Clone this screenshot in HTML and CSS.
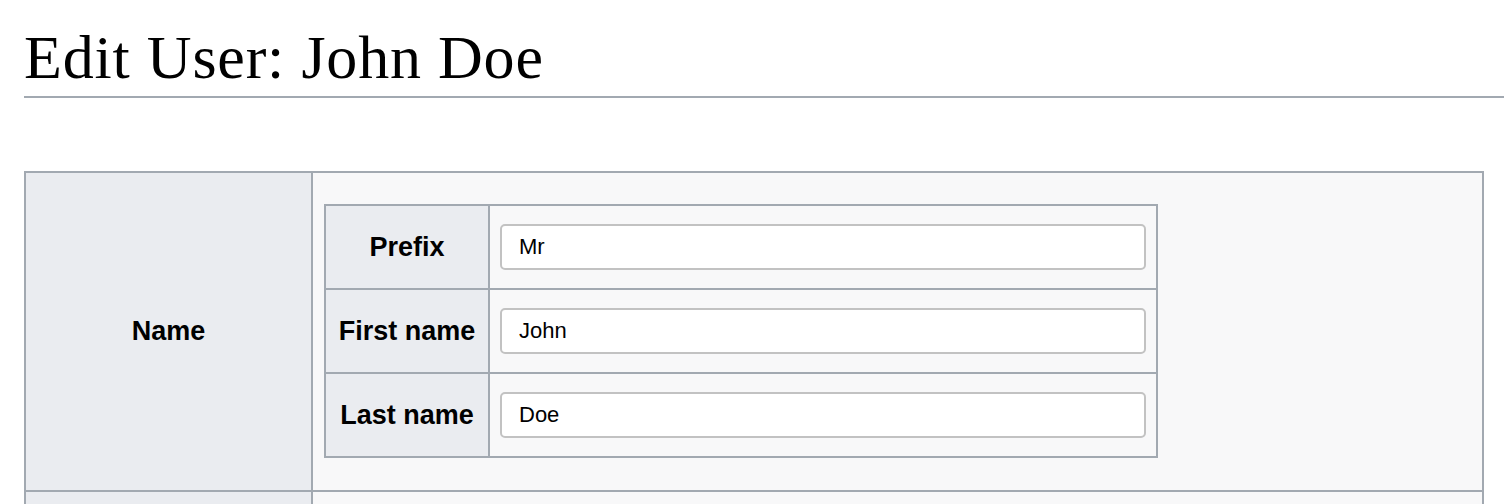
FILE: index.html
```html
<!DOCTYPE html>
<html lang="en">
<head>
<meta charset="utf-8">
<title>Edit User: John Doe</title>
<link rel="stylesheet" href="styles.css">
</head>
<body>
<h1 class="page-title">Edit User: John Doe</h1>
<table class="wikitable outer">
  <tr>
    <th class="outer-head">Name</th>
    <td class="outer-cell">
      <table class="wikitable inner">
        <tr>
          <th class="inner-head">Prefix</th>
          <td class="inner-cell"><input class="field" type="text" value="Mr"></td>
        </tr>
        <tr>
          <th class="inner-head">First name</th>
          <td class="inner-cell"><input class="field" type="text" value="John"></td>
        </tr>
        <tr>
          <th class="inner-head">Last name</th>
          <td class="inner-cell"><input class="field" type="text" value="Doe"></td>
        </tr>
      </table>
    </td>
  </tr>
  <tr>
    <th class="outer-head">&nbsp;</th>
    <td class="outer-cell">&nbsp;</td>
  </tr>
</table>
</body>
</html>
```
FILE: styles.css
```css
html, body {
  margin: 0;
  padding: 0;
  background: #ffffff;
  color: #000000;
}
body {
  padding-left: 24px;
  font-family: "Liberation Sans", Arial, sans-serif;
  overflow: hidden;
}
.page-title {
  font-family: "Liberation Serif", "Times New Roman", serif;
  font-weight: normal;
  font-size: 62px;
  letter-spacing: 0.8px;
  line-height: 72px;
  margin: 21px 0 0 0;
  padding: 0 0 3px 0;
  border-bottom: 2px solid #a2a9b1;
}
.wikitable {
  border-collapse: collapse;
  border: 2px solid #a2a9b1;
}
.wikitable th,
.wikitable td {
  border: 2px solid #a2a9b1;
}
.outer {
  margin-top: 73px;
  width: 1460px;
}
.outer-head {
  width: 285px;
  background: #eaecf0;
  font-size: 27px;
  font-weight: bold;
  text-align: center;
  padding: 0;
}
.outer-cell {
  background: #f8f8f9;
  padding: 31px 11px 32px 11px;
}
.inner {
  width: 834px;
}
.inner-head {
  width: 162px;
  height: 82px;
  padding: 0;
  background: #eaecf0;
  font-size: 27px;
  font-weight: bold;
  text-align: center;
  white-space: nowrap;
}
.inner-cell {
  background: #f8f8f9;
  padding: 0 10px;
}
.field {
  display: block;
  box-sizing: border-box;
  width: 100%;
  height: 46px;
  margin: 0;
  padding: 0 17px;
  border: 2px solid #c2c2c2;
  border-radius: 5px;
  background: #ffffff;
  font-family: "Liberation Sans", Arial, sans-serif;
  font-size: 22px;
  color: #000000;
}
```
